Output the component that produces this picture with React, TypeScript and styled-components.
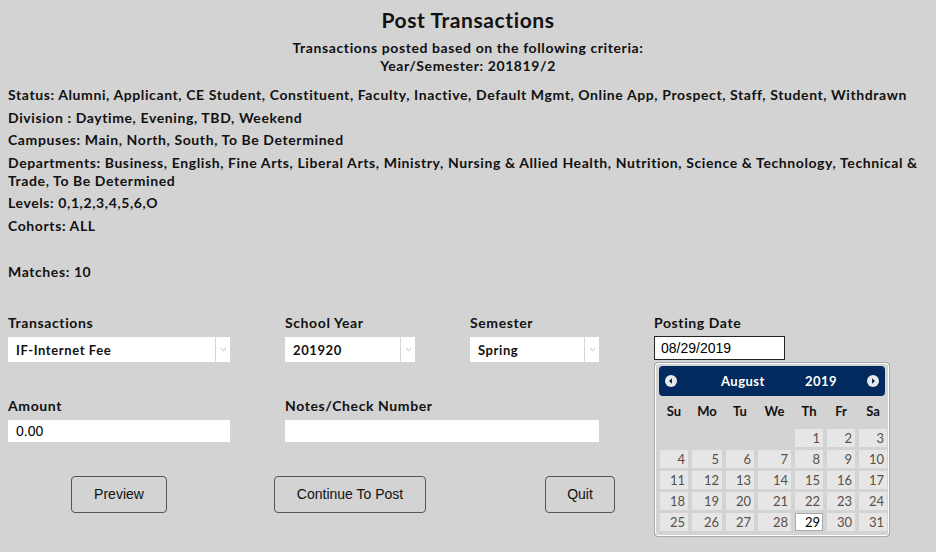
import styled, { createGlobalStyle } from "styled-components";

const GlobalStyle = createGlobalStyle`
  html, body {
    margin: 0;
    padding: 0;
    background: #d3d3d3;
  }
  body {
    font-family: Lato, "Open Sans", sans-serif;
    color: #111;
  }
`;

const Page = styled.div`
  width: 936px;
  height: 552px;
  box-sizing: border-box;
  padding: 8px 8px 0 8px;
  overflow: hidden;
  font-weight: 700;
  font-size: 14px;
  letter-spacing: 0.6px;
`;

const Title = styled.h1`
  margin: 0;
  text-align: center;
  font-size: 21px;
  line-height: 24px;
  font-weight: 700;
`;

const Subtitle = styled.div`
  margin-top: 7px;
  text-align: center;
  font-size: 14px;
  line-height: 18px;
`;

const Criteria = styled.div`
  margin-top: 11px;
  display: flex;
  flex-direction: column;
  gap: 4.6px;
`;

const Line = styled.p<{ $gapBefore?: number }>`
  margin: 0;
  margin-top: ${(p) => p.$gapBefore ?? 0}px;
  line-height: 18px;
`;

const Form = styled.div`
  margin-top: 33px;
  display: grid;
  grid-template-columns: 277px 185px 184px 1fr;
  row-gap: 35px;
`;

const Field = styled.div<{ $span?: number }>`
  grid-column: span ${(p) => p.$span ?? 1};
  display: flex;
  flex-direction: column;
  gap: 5px;
  position: relative;
`;

const Label = styled.label`
  line-height: 18px;
`;

const SelectBox = styled.div<{ $width: number }>`
  width: ${(p) => p.$width}px;
  height: 25px;
  background: #fff;
  display: flex;
  align-items: center;
  font-size: 13px;
`;

const SelectValue = styled.span`
  flex: 1;
  padding-left: 8px;
  padding-top: 2px;
`;

const SelectArrow = styled.span`
  width: 14px;
  height: 100%;
  border-left: 1px solid #d6d6d6;
  display: flex;
  align-items: center;
  justify-content: center;
`;

const TextInput = styled.div<{ $width: number }>`
  width: ${(p) => p.$width}px;
  height: 22px;
  box-sizing: border-box;
  background: #fff;
  padding-left: 8px;
  display: flex;
  align-items: center;
  font-family: "Liberation Sans", Arial, sans-serif;
  font-weight: 400;
  font-size: 14px;
  letter-spacing: 0;
  color: #000;
`;

const DateInput = styled.div`
  width: 131px;
  height: 24px;
  margin-top: -1px;
  box-sizing: border-box;
  background: #fff;
  border: 1px solid #222;
  padding-left: 6px;
  display: flex;
  align-items: center;
  font-family: "Liberation Sans", Arial, sans-serif;
  font-weight: 400;
  font-size: 14px;
  letter-spacing: 0;
  color: #000;
`;

const ButtonRow = styled.div`
  margin-top: 34px;
  display: flex;
  align-items: flex-start;
`;

const Button = styled.button<{ $width: number; $left: number }>`
  width: ${(p) => p.$width}px;
  height: 37px;
  margin-left: ${(p) => p.$left}px;
  background: transparent;
  border: 1px solid #555;
  border-radius: 4px;
  font-family: "Liberation Sans", Arial, sans-serif;
  font-size: 14px;
  color: #111;
  padding: 0;
`;

/* datepicker popup */

const Calendar = styled.div`
  position: absolute;
  top: 49px;
  left: 1px;
  width: 234px;
  box-sizing: border-box;
  padding: 2px 3px 4px 3px;
  background: #d3d3d3;
  border: 1px solid #fff;
  border-radius: 3px;
  box-shadow: 0 0 0 1px #a8a8a8;
  font-family: Lato, "Open Sans", sans-serif;
  letter-spacing: 0;
  z-index: 2;
`;

const CalHeader = styled.div`
  height: 30px;
  background: #022a5e;
  border-radius: 4px;
  display: flex;
  align-items: center;
  justify-content: space-between;
  padding: 0 6px;
  color: #fff;
  font-size: 13px;
  font-weight: 700;
`;

const CalTitle = styled.div`
  display: flex;
  gap: 40px;
  margin-left: 14px;
  letter-spacing: 0.5px;
`;

const DayGrid = styled.div`
  display: grid;
  grid-template-columns: 28px 30px 28px 33px 28px 28px 28px;
  column-gap: 4px;
  row-gap: 3px;
  padding-left: 1px;
`;

const WeekDay = styled.div`
  line-height: 30px;
  text-align: center;
  font-size: 13px;
  font-weight: 700;
  color: #111;
`;

const DayCell = styled.div<{ $active?: boolean; $empty?: boolean }>`
  height: 18px;
  box-sizing: border-box;
  background: ${(p) => (p.$empty ? "transparent" : p.$active ? "#fff" : "#e6e6e6")};
  border: 1px solid ${(p) => (p.$active ? "#aaa" : "transparent")};
  text-align: right;
  padding-right: 2px;
  font-size: 13px;
  font-weight: 400;
  line-height: 17px;
  color: ${(p) => (p.$active ? "#000" : "#5a4e48")};
`;

const Chevron = () => (
  <svg width="7" height="5" viewBox="0 0 7 5">
    <path d="M1 1.2 L3.5 3.6 L6 1.2" fill="none" stroke="#b4b4b4" strokeWidth="1" />
  </svg>
);

const NavIcon = ({ dir }: { dir: "prev" | "next" }) => (
  <svg width="12" height="12" viewBox="0 0 12 12">
    <circle cx="6" cy="6" r="6" fill="#e8e8e8" />
    {dir === "prev" ? (
      <path d="M7 3.2 L4 6 L7 8.8 Z" fill="#022a5e" />
    ) : (
      <path d="M5 3.2 L8 6 L5 8.8 Z" fill="#022a5e" />
    )}
  </svg>
);

const weekDays = ["Su", "Mo", "Tu", "We", "Th", "Fr", "Sa"];

function DatePicker() {
  const cells: (number | null)[] = [null, null, null, null];
  for (let d = 1; d <= 31; d++) cells.push(d);
  return (
    <Calendar>
      <CalHeader>
        <NavIcon dir="prev" />
        <CalTitle>
          <span>August</span>
          <span>2019</span>
        </CalTitle>
        <NavIcon dir="next" />
      </CalHeader>
      <DayGrid>
        {weekDays.map((w) => (
          <WeekDay key={w}>{w}</WeekDay>
        ))}
        {cells.map((d, i) =>
          d === null ? (
            <DayCell key={i} $empty />
          ) : (
            <DayCell key={i} $active={d === 29}>
              {d}
            </DayCell>
          )
        )}
      </DayGrid>
    </Calendar>
  );
}

export default function App() {
  return (
    <>
      <GlobalStyle />
      <Page>
        <Title>Post Transactions</Title>
        <Subtitle>
          Transactions posted based on the following criteria:
          <br />
          Year/Semester: 201819/2
        </Subtitle>
        <Criteria>
          <Line>
            Status: Alumni, Applicant, CE Student, Constituent, Faculty, Inactive, Default Mgmt, Online
            App, Prospect, Staff, Student, Withdrawn
          </Line>
          <Line>Division : Daytime, Evening, TBD, Weekend</Line>
          <Line>Campuses: Main, North, South, To Be Determined</Line>
          <Line>
            Departments: Business, English, Fine Arts, Liberal Arts, Ministry, Nursing &amp; Allied
            Health, Nutrition, Science &amp; Technology, Technical &amp; Trade, To Be Determined
          </Line>
          <Line>Levels: 0,1,2,3,4,5,6,O</Line>
          <Line>Cohorts: ALL</Line>
          <Line $gapBefore={23}>Matches: 10</Line>
        </Criteria>

        <Form>
          <Field>
            <Label>Transactions</Label>
            <SelectBox $width={222}>
              <SelectValue>IF-Internet Fee</SelectValue>
              <SelectArrow>
                <Chevron />
              </SelectArrow>
            </SelectBox>
          </Field>
          <Field>
            <Label>School Year</Label>
            <SelectBox $width={130}>
              <SelectValue>201920</SelectValue>
              <SelectArrow>
                <Chevron />
              </SelectArrow>
            </SelectBox>
          </Field>
          <Field>
            <Label>Semester</Label>
            <SelectBox $width={129}>
              <SelectValue>Spring</SelectValue>
              <SelectArrow>
                <Chevron />
              </SelectArrow>
            </SelectBox>
          </Field>
          <Field>
            <Label>Posting Date</Label>
            <DateInput>08/29/2019</DateInput>
            <DatePicker />
          </Field>

          <Field>
            <Label>Amount</Label>
            <TextInput $width={222}>0.00</TextInput>
          </Field>
          <Field $span={2}>
            <Label>Notes/Check Number</Label>
            <TextInput $width={314} />
          </Field>
        </Form>

        <ButtonRow>
          <Button $width={96} $left={63}>
            Preview
          </Button>
          <Button $width={152} $left={107}>
            Continue To Post
          </Button>
          <Button $width={70} $left={119}>
            Quit
          </Button>
        </ButtonRow>
      </Page>
    </>
  );
}
